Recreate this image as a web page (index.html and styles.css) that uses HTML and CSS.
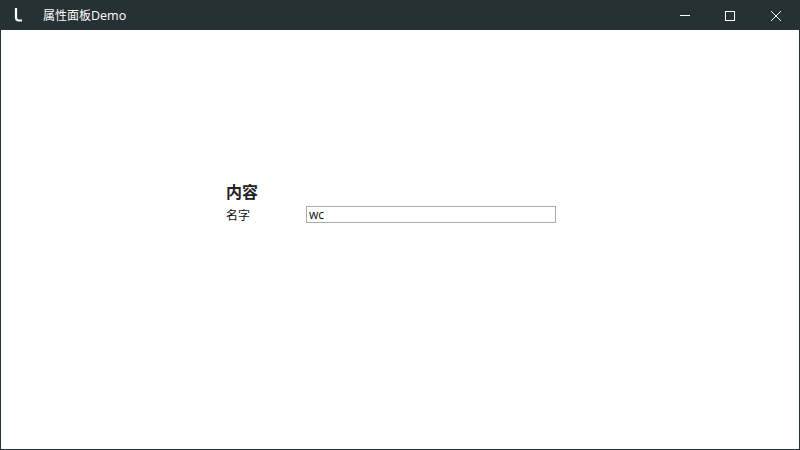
FILE: index.html
```html
<!DOCTYPE html>
<html lang="zh-CN">
<head>
<meta charset="utf-8">
<title>属性面板Demo</title>
<link rel="stylesheet" href="styles.css">
</head>
<body>
<div class="window">
  <header class="titlebar">
    <svg class="logo" width="10" height="16" viewBox="0 0 10 16"><path d="M2 1V10.5Q2 13.5 5 13.5H8" fill="none" stroke="#fff" stroke-width="2.2"/></svg>
    <span class="title">属性面板<span class="latin">Demo</span></span>
    <div class="controls">
      <div class="ctl"><svg width="12" height="12" viewBox="0 0 12 12"><path d="M2 6.5H12" stroke="#fff" fill="none"/></svg></div>
      <div class="ctl"><svg width="12" height="12" viewBox="0 0 12 12"><rect x="1.5" y="2.5" width="9" height="9" stroke="#fff" fill="none"/></svg></div>
      <div class="ctl"><svg width="12" height="12" viewBox="0 0 12 12"><path d="M1 2L11 12M11 2L1 12" stroke="#fff" fill="none"/></svg></div>
    </div>
  </header>
  <main class="content">
    <section class="panel">
      <h1 class="heading">内容</h1>
      <div class="row">
        <label class="label">名字</label>
        <input class="field" type="text" value="wc">
      </div>
    </section>
  </main>
</div>
</body>
</html>
```
FILE: styles.css
```css
html, body {
  margin: 0;
  padding: 0;
  width: 800px;
  height: 450px;
  overflow: hidden;
  font-family: "Noto Sans CJK SC", "Noto Sans", sans-serif;
}
.window {
  box-sizing: border-box;
  width: 800px;
  height: 450px;
  display: flex;
  flex-direction: column;
  background: #fff;
  border: 1px solid #263133;
  border-top: 0;
}
.titlebar {
  flex: none;
  height: 30px;
  margin: 0 -1px;
  background: #263133;
  display: flex;
  align-items: center;
  color: #fff;
}
.logo {
  flex: none;
  margin-left: 14px;
}
.title {
  margin-left: 19px;
  font-size: 12px;
  line-height: 30px;
}
.latin {
  font-family: "Open Sans", sans-serif;
  font-size: 12.5px;
}
.controls {
  margin-left: auto;
  display: flex;
  margin-right: 1px;
}
.ctl {
  width: 46px;
  height: 30px;
  display: flex;
  align-items: center;
  justify-content: center;
}
.content {
  flex: 1;
  padding: 149px 0 0 225px;
}
.panel {
  display: flex;
  flex-direction: column;
}
.heading {
  margin: 0;
  font-size: 16px;
  font-weight: 700;
  line-height: 24px;
  color: #222;
  padding-bottom: 3px;
}
.row {
  display: flex;
  align-items: center;
  height: 17px;
}
.label {
  width: 80px;
  font-size: 12px;
  color: #111;
}
.field {
  box-sizing: border-box;
  width: 250px;
  height: 17px;
  padding: 0 2px;
  margin: 0;
  border: 1px solid #ababab;
  border-radius: 0;
  outline: 0;
  font-family: "Open Sans", sans-serif;
  font-size: 12px;
  color: #111;
  background: #fff;
}
```
